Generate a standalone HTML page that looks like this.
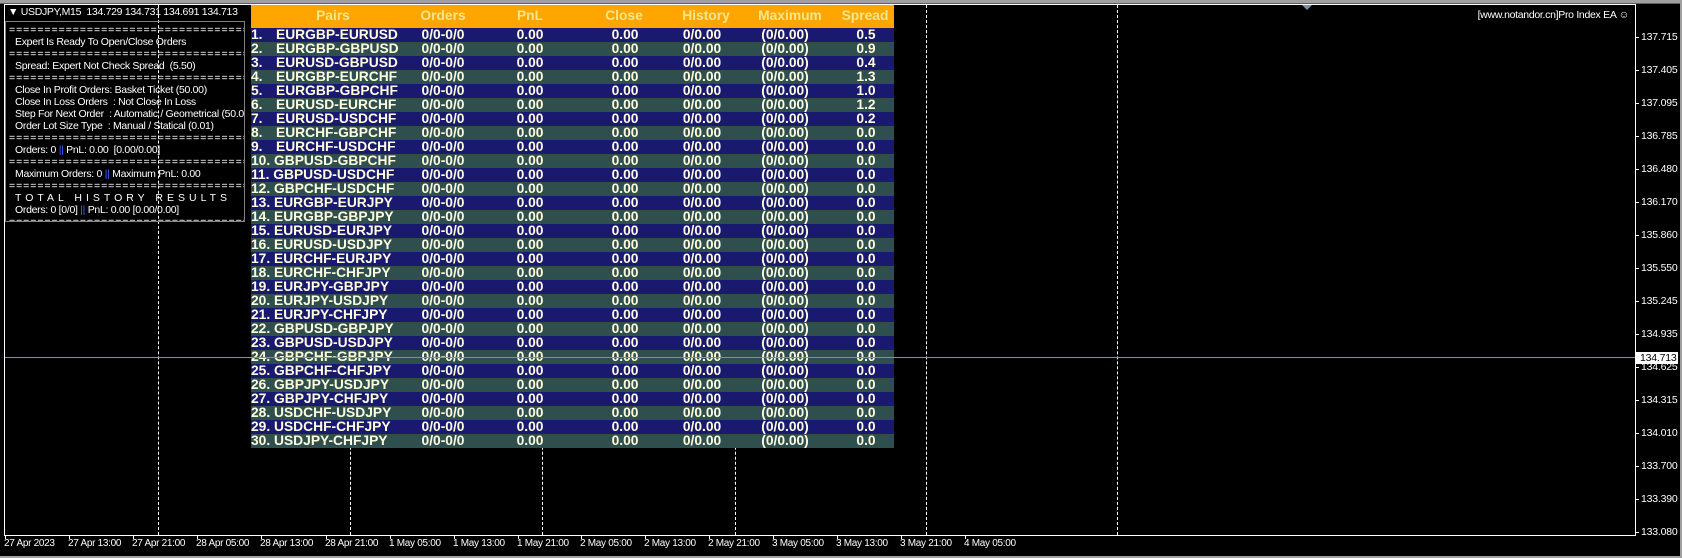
<!DOCTYPE html>
<html><head><meta charset="utf-8"><style>
*{margin:0;padding:0;box-sizing:border-box}
body{width:1682px;height:558px;background:#000;position:relative;overflow:hidden;font-family:"Liberation Sans",Arial,sans-serif;color:#fff}
.a{position:absolute}
.dash{position:absolute;top:5px;height:530px;width:0;border-left:1px dashed #fff}
.info{position:absolute;left:5px;top:21px;width:240px;height:201px;border:1px solid #808080;font-size:10.5px;line-height:12px;color:#fff;padding:2px 0 0 9px;white-space:pre;letter-spacing:-0.3px;overflow:hidden}
.info .eq{margin-left:-6px;letter-spacing:0.95px}
.tbl{position:absolute;left:251px;top:5px;width:643px;font-weight:bold;font-size:13.8px}
.hd{height:23px;background:#ffa500;color:#f0e68c;position:relative}
.hd span{position:absolute;top:3px;text-align:center}
.r{height:14px;position:relative;color:#fffde0;line-height:14px}
.r:nth-child(even){background:#191970}
.r:nth-child(odd){background:#2f4f4f}
.r span{position:absolute;top:0;text-align:center;white-space:nowrap}
.n{left:0;text-align:left!important}
.p{left:25px;text-align:left!important}
.c1{left:142px;width:100px}.c2{left:239px;width:80px}.c3{left:334px;width:80px}.c4{left:401px;width:100px}.c5{left:484px;width:100px}.c6{left:585px;width:60px}
.pr{position:absolute;left:1641px;font-size:10.5px;color:#fff;line-height:12px;letter-spacing:-0.2px}
.tk{position:absolute;left:1635px;width:4px;height:1px;background:#fff}
.tl{position:absolute;top:538px;font-size:10px;color:#fff;white-space:nowrap;letter-spacing:-0.3px}
.tt{position:absolute;top:535px;width:1px;height:4px;background:#fff}
</style></head><body>
<div class="a" style="left:0;top:0;width:1682px;height:4px;background:#a0a0a0"></div>
<div class="a" style="left:0;top:3px;width:1682px;height:1px;background:#606060"></div>
<div class="a" style="left:0;top:556px;width:1682px;height:2px;background:#a0a0a0"></div>
<div class="a" style="left:1680px;top:0;width:2px;height:558px;background:#a0a0a0"></div>
<div class="a" style="left:4px;top:4px;width:1632px;height:1px;background:#fff"></div>
<div class="a" style="left:4px;top:4px;width:1px;height:532px;background:#fff"></div>
<div class="a" style="left:1635px;top:4px;width:1px;height:532px;background:#fff"></div>
<div class="a" style="left:4px;top:535px;width:1632px;height:1px;background:#fff"></div>
<div class="dash" style="left:158px"></div>
<div class="dash" style="left:350px"></div>
<div class="dash" style="left:542px"></div>
<div class="dash" style="left:735px"></div>
<div class="dash" style="left:926px"></div>
<div class="dash" style="left:1117px"></div>
<div class="a" style="left:1302px;top:5px;width:0;height:0;border-left:5px solid transparent;border-right:5px solid transparent;border-top:5px solid #8090a0"></div>
<div class="a" style="left:8px;top:6px;font-size:10.5px;white-space:nowrap;letter-spacing:-0.3px">&#9660; USDJPY,M15&nbsp; 134.729 134.731 134.691 134.713</div>
<div class="a" style="right:53px;top:9px;font-size:10.5px;white-space:nowrap;letter-spacing:-0.3px">[www.notandor.cn]Pro Index EA &#9786;</div>
<div class="info"><div class="eq">==================================</div>Expert Is Ready To Open/Close Orders
<div class="eq">==================================</div>Spread: Expert Not Check Spread  (5.50)
<div class="eq">==================================</div>Close In Profit Orders: Basket Ticket (50.00)
Close In Loss Orders  : Not Close In Loss
Step For Next Order  : Automatic / Geometrical (50.0)
Order Lot Size Type  : Manual / Statical (0.01)
<div class="eq">==================================</div>Orders: 0 <span style="color:#4060ff">||</span> PnL: 0.00  [0.00/0.00]
<div class="eq">==================================</div>Maximum Orders: 0 <span style="color:#4060ff">||</span> Maximum PnL: 0.00
<div class="eq">==================================</div><span style="letter-spacing:4px">TOTAL HISTORY RESULTS</span>
Orders: 0 [0/0] <span style="color:#4060ff">||</span> PnL: 0.00 [0.00/0.00]
<div class="eq">==================================</div></div>
<div class="tbl">
<div class="hd"><span style="left:52px;width:60px">Pairs</span><span class="c1">Orders</span><span style="left:239px;width:80px">PnL</span><span style="left:333px;width:80px">Close</span><span style="left:405px;width:100px">History</span><span style="left:489px;width:100px">Maximum</span><span style="left:584px;width:60px">Spread</span></div>
<div class="r"><span class="n">1.</span><span class="p">EURGBP-EURUSD</span><span class="c1">0/0-0/0</span><span class="c2">0.00</span><span class="c3">0.00</span><span class="c4">0/0.00</span><span class="c5">(0/0.00)</span><span class="c6">0.5</span></div>
<div class="r"><span class="n">2.</span><span class="p">EURGBP-GBPUSD</span><span class="c1">0/0-0/0</span><span class="c2">0.00</span><span class="c3">0.00</span><span class="c4">0/0.00</span><span class="c5">(0/0.00)</span><span class="c6">0.9</span></div>
<div class="r"><span class="n">3.</span><span class="p">EURUSD-GBPUSD</span><span class="c1">0/0-0/0</span><span class="c2">0.00</span><span class="c3">0.00</span><span class="c4">0/0.00</span><span class="c5">(0/0.00)</span><span class="c6">0.4</span></div>
<div class="r"><span class="n">4.</span><span class="p">EURGBP-EURCHF</span><span class="c1">0/0-0/0</span><span class="c2">0.00</span><span class="c3">0.00</span><span class="c4">0/0.00</span><span class="c5">(0/0.00)</span><span class="c6">1.3</span></div>
<div class="r"><span class="n">5.</span><span class="p">EURGBP-GBPCHF</span><span class="c1">0/0-0/0</span><span class="c2">0.00</span><span class="c3">0.00</span><span class="c4">0/0.00</span><span class="c5">(0/0.00)</span><span class="c6">1.0</span></div>
<div class="r"><span class="n">6.</span><span class="p">EURUSD-EURCHF</span><span class="c1">0/0-0/0</span><span class="c2">0.00</span><span class="c3">0.00</span><span class="c4">0/0.00</span><span class="c5">(0/0.00)</span><span class="c6">1.2</span></div>
<div class="r"><span class="n">7.</span><span class="p">EURUSD-USDCHF</span><span class="c1">0/0-0/0</span><span class="c2">0.00</span><span class="c3">0.00</span><span class="c4">0/0.00</span><span class="c5">(0/0.00)</span><span class="c6">0.2</span></div>
<div class="r"><span class="n">8.</span><span class="p">EURCHF-GBPCHF</span><span class="c1">0/0-0/0</span><span class="c2">0.00</span><span class="c3">0.00</span><span class="c4">0/0.00</span><span class="c5">(0/0.00)</span><span class="c6">0.0</span></div>
<div class="r"><span class="n">9.</span><span class="p">EURCHF-USDCHF</span><span class="c1">0/0-0/0</span><span class="c2">0.00</span><span class="c3">0.00</span><span class="c4">0/0.00</span><span class="c5">(0/0.00)</span><span class="c6">0.0</span></div>
<div class="r"><span class="n">10. GBPUSD-GBPCHF</span><span class="c1">0/0-0/0</span><span class="c2">0.00</span><span class="c3">0.00</span><span class="c4">0/0.00</span><span class="c5">(0/0.00)</span><span class="c6">0.0</span></div>
<div class="r"><span class="n">11. GBPUSD-USDCHF</span><span class="c1">0/0-0/0</span><span class="c2">0.00</span><span class="c3">0.00</span><span class="c4">0/0.00</span><span class="c5">(0/0.00)</span><span class="c6">0.0</span></div>
<div class="r"><span class="n">12. GBPCHF-USDCHF</span><span class="c1">0/0-0/0</span><span class="c2">0.00</span><span class="c3">0.00</span><span class="c4">0/0.00</span><span class="c5">(0/0.00)</span><span class="c6">0.0</span></div>
<div class="r"><span class="n">13. EURGBP-EURJPY</span><span class="c1">0/0-0/0</span><span class="c2">0.00</span><span class="c3">0.00</span><span class="c4">0/0.00</span><span class="c5">(0/0.00)</span><span class="c6">0.0</span></div>
<div class="r"><span class="n">14. EURGBP-GBPJPY</span><span class="c1">0/0-0/0</span><span class="c2">0.00</span><span class="c3">0.00</span><span class="c4">0/0.00</span><span class="c5">(0/0.00)</span><span class="c6">0.0</span></div>
<div class="r"><span class="n">15. EURUSD-EURJPY</span><span class="c1">0/0-0/0</span><span class="c2">0.00</span><span class="c3">0.00</span><span class="c4">0/0.00</span><span class="c5">(0/0.00)</span><span class="c6">0.0</span></div>
<div class="r"><span class="n">16. EURUSD-USDJPY</span><span class="c1">0/0-0/0</span><span class="c2">0.00</span><span class="c3">0.00</span><span class="c4">0/0.00</span><span class="c5">(0/0.00)</span><span class="c6">0.0</span></div>
<div class="r"><span class="n">17. EURCHF-EURJPY</span><span class="c1">0/0-0/0</span><span class="c2">0.00</span><span class="c3">0.00</span><span class="c4">0/0.00</span><span class="c5">(0/0.00)</span><span class="c6">0.0</span></div>
<div class="r"><span class="n">18. EURCHF-CHFJPY</span><span class="c1">0/0-0/0</span><span class="c2">0.00</span><span class="c3">0.00</span><span class="c4">0/0.00</span><span class="c5">(0/0.00)</span><span class="c6">0.0</span></div>
<div class="r"><span class="n">19. EURJPY-GBPJPY</span><span class="c1">0/0-0/0</span><span class="c2">0.00</span><span class="c3">0.00</span><span class="c4">0/0.00</span><span class="c5">(0/0.00)</span><span class="c6">0.0</span></div>
<div class="r"><span class="n">20. EURJPY-USDJPY</span><span class="c1">0/0-0/0</span><span class="c2">0.00</span><span class="c3">0.00</span><span class="c4">0/0.00</span><span class="c5">(0/0.00)</span><span class="c6">0.0</span></div>
<div class="r"><span class="n">21. EURJPY-CHFJPY</span><span class="c1">0/0-0/0</span><span class="c2">0.00</span><span class="c3">0.00</span><span class="c4">0/0.00</span><span class="c5">(0/0.00)</span><span class="c6">0.0</span></div>
<div class="r"><span class="n">22. GBPUSD-GBPJPY</span><span class="c1">0/0-0/0</span><span class="c2">0.00</span><span class="c3">0.00</span><span class="c4">0/0.00</span><span class="c5">(0/0.00)</span><span class="c6">0.0</span></div>
<div class="r"><span class="n">23. GBPUSD-USDJPY</span><span class="c1">0/0-0/0</span><span class="c2">0.00</span><span class="c3">0.00</span><span class="c4">0/0.00</span><span class="c5">(0/0.00)</span><span class="c6">0.0</span></div>
<div class="r"><span class="n">24. GBPCHF-GBPJPY</span><span class="c1">0/0-0/0</span><span class="c2">0.00</span><span class="c3">0.00</span><span class="c4">0/0.00</span><span class="c5">(0/0.00)</span><span class="c6">0.0</span></div>
<div class="r"><span class="n">25. GBPCHF-CHFJPY</span><span class="c1">0/0-0/0</span><span class="c2">0.00</span><span class="c3">0.00</span><span class="c4">0/0.00</span><span class="c5">(0/0.00)</span><span class="c6">0.0</span></div>
<div class="r"><span class="n">26. GBPJPY-USDJPY</span><span class="c1">0/0-0/0</span><span class="c2">0.00</span><span class="c3">0.00</span><span class="c4">0/0.00</span><span class="c5">(0/0.00)</span><span class="c6">0.0</span></div>
<div class="r"><span class="n">27. GBPJPY-CHFJPY</span><span class="c1">0/0-0/0</span><span class="c2">0.00</span><span class="c3">0.00</span><span class="c4">0/0.00</span><span class="c5">(0/0.00)</span><span class="c6">0.0</span></div>
<div class="r"><span class="n">28. USDCHF-USDJPY</span><span class="c1">0/0-0/0</span><span class="c2">0.00</span><span class="c3">0.00</span><span class="c4">0/0.00</span><span class="c5">(0/0.00)</span><span class="c6">0.0</span></div>
<div class="r"><span class="n">29. USDCHF-CHFJPY</span><span class="c1">0/0-0/0</span><span class="c2">0.00</span><span class="c3">0.00</span><span class="c4">0/0.00</span><span class="c5">(0/0.00)</span><span class="c6">0.0</span></div>
<div class="r"><span class="n">30. USDJPY-CHFJPY</span><span class="c1">0/0-0/0</span><span class="c2">0.00</span><span class="c3">0.00</span><span class="c4">0/0.00</span><span class="c5">(0/0.00)</span><span class="c6">0.0</span></div>
</div>
<div class="a" style="left:5px;top:357px;width:1630px;height:1px;background:#8090a0"></div>
<div class="tk" style="top:37px"></div><div class="pr" style="top:31px">137.715</div>
<div class="tk" style="top:70px"></div><div class="pr" style="top:64px">137.405</div>
<div class="tk" style="top:103px"></div><div class="pr" style="top:97px">137.095</div>
<div class="tk" style="top:136px"></div><div class="pr" style="top:130px">136.785</div>
<div class="tk" style="top:169px"></div><div class="pr" style="top:163px">136.480</div>
<div class="tk" style="top:202px"></div><div class="pr" style="top:196px">136.170</div>
<div class="tk" style="top:235px"></div><div class="pr" style="top:229px">135.860</div>
<div class="tk" style="top:268px"></div><div class="pr" style="top:262px">135.550</div>
<div class="tk" style="top:301px"></div><div class="pr" style="top:295px">135.245</div>
<div class="tk" style="top:334px"></div><div class="pr" style="top:328px">134.935</div>
<div class="tk" style="top:367px"></div><div class="pr" style="top:361px">134.625</div>
<div class="tk" style="top:400px"></div><div class="pr" style="top:394px">134.315</div>
<div class="tk" style="top:433px"></div><div class="pr" style="top:427px">134.010</div>
<div class="tk" style="top:466px"></div><div class="pr" style="top:460px">133.700</div>
<div class="tk" style="top:499px"></div><div class="pr" style="top:493px">133.390</div>
<div class="tk" style="top:532px"></div><div class="pr" style="top:526px">133.080</div>
<div class="a" style="left:1636px;top:352px;width:42px;height:12px;background:#fff;color:#000;font-size:10.5px;line-height:12px;padding-left:4px;letter-spacing:-0.2px;white-space:nowrap">134.713</div>
<div class="tt" style="left:5px"></div><div class="tl" style="left:4px">27 Apr 2023</div>
<div class="tt" style="left:69px"></div><div class="tl" style="left:68px">27 Apr 13:00</div>
<div class="tt" style="left:133px"></div><div class="tl" style="left:132px">27 Apr 21:00</div>
<div class="tt" style="left:197px"></div><div class="tl" style="left:196px">28 Apr 05:00</div>
<div class="tt" style="left:261px"></div><div class="tl" style="left:260px">28 Apr 13:00</div>
<div class="tt" style="left:326px"></div><div class="tl" style="left:325px">28 Apr 21:00</div>
<div class="tt" style="left:390px"></div><div class="tl" style="left:389px">1 May 05:00</div>
<div class="tt" style="left:454px"></div><div class="tl" style="left:453px">1 May 13:00</div>
<div class="tt" style="left:518px"></div><div class="tl" style="left:517px">1 May 21:00</div>
<div class="tt" style="left:581px"></div><div class="tl" style="left:580px">2 May 05:00</div>
<div class="tt" style="left:645px"></div><div class="tl" style="left:644px">2 May 13:00</div>
<div class="tt" style="left:709px"></div><div class="tl" style="left:708px">2 May 21:00</div>
<div class="tt" style="left:773px"></div><div class="tl" style="left:772px">3 May 05:00</div>
<div class="tt" style="left:837px"></div><div class="tl" style="left:836px">3 May 13:00</div>
<div class="tt" style="left:901px"></div><div class="tl" style="left:900px">3 May 21:00</div>
<div class="tt" style="left:965px"></div><div class="tl" style="left:964px">4 May 05:00</div>
</body></html>
